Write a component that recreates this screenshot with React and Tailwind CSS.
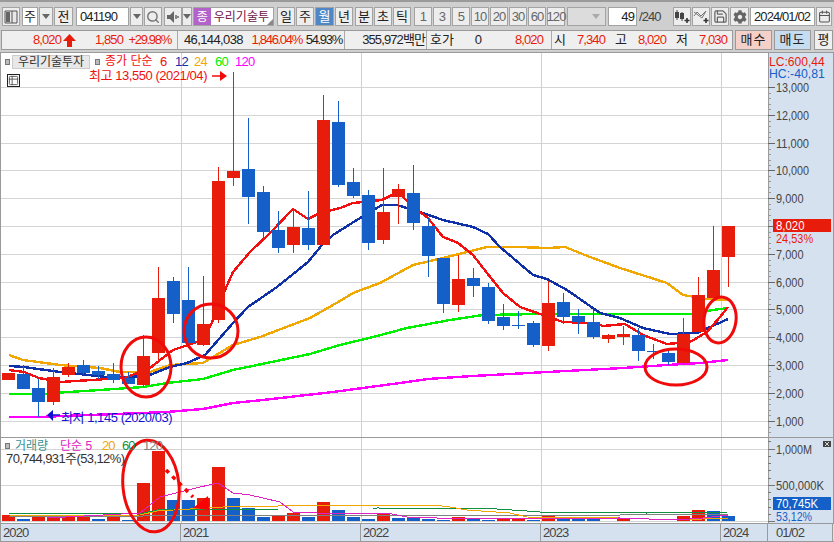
import React from "react";
import { Search, Save, Calendar, Table2 } from "lucide-react";
import { FaCog } from "react-icons/fa";

const RED = "#e81c0a";
const BLUE = "#1460c8";

// [top, bottom, wickTop, wickBottom, color]
const candles = [
  [373, 380, 373, 380, "r"], [374, 389, 365, 389, "b"], [388, 402, 379, 417, "b"], [377, 402, 368, 405, "r"],
  [367, 375, 363, 377, "r"], [365, 373, 360, 375, "b"], [371, 375, 366, 379, "b"], [374, 380, 363, 383, "b"],
  [378, 384, 372, 384, "b"], [356, 385, 335, 387, "r"], [298, 353, 267, 360, "r"], [281, 314, 277, 323, "b"],
  [300, 343, 267, 345, "b"], [324, 345, 276, 346, "r"], [181, 320, 167, 323, "r"], [171, 178, 72, 186, "r"],
  [169, 197, 118, 224, "b"], [192, 232, 186, 241, "b"], [230, 248, 211, 253, "b"], [227, 245, 210, 253, "r"],
  [228, 245, 191, 250, "b"], [120, 245, 95, 245, "r"], [122, 185, 101, 187, "b"], [182, 196, 168, 198, "b"],
  [195, 243, 190, 250, "b"], [212, 240, 168, 244, "r"], [189, 197, 184, 224, "r"], [193, 223, 165, 230, "b"],
  [226, 256, 218, 277, "b"], [258, 304, 258, 313, "b"], [279, 305, 255, 312, "r"], [278, 286, 268, 297, "b"],
  [287, 321, 283, 324, "b"], [317, 326, 304, 330, "b"], [325, 326, 311, 329, "b"], [323, 345, 321, 347, "b"],
  [303, 346, 281, 351, "r"], [302, 317, 293, 324, "b"], [316, 322, 309, 334, "b"], [322, 337, 310, 339, "b"],
  [335, 339, 334, 343, "r"], [334, 337, 326, 345, "r"], [335, 351, 328, 361, "b"], [351, 352, 344, 359, "b"],
  [353, 362, 351, 365, "b"], [334, 363, 318, 365, "r"], [295, 332, 277, 332, "r"], [270, 298, 226, 298, "r"],
  [226, 257, 226, 287, "r"],
];

const volumes = [
  [515, "r"], [519, "b"], [517, "r"], [517, "r"], [517, "r"], [517, "r"], [519, "b"], [517, "r"], [520, "b"], [483, "r"],
  [451, "r"], [500, "b"], [500, "b"], [498, "r"], [467, "r"], [498, "b"], [508, "b"], [517, "b"], [516, "r"], [513, "r"],
  [517, "b"], [502, "r"], [510, "b"], [517, "b"], [519, "b"], [514, "r"], [518, "b"], [517, "b"], [519, "b"], [520, "b"],
  [517, "r"], [519, "b"], [520, "b"], [519, "r"], [519, "r"], [520, "b"], [516, "r"], [518, "b"], [519, "b"], [519, "b"],
  [521, "b"], [519, "r"], [521, "b"], [521, "b"], [521, "b"], [516, "r"], [510, "r"], [511, "b"], [516, "b"],
];

const ma6 = "9,370 24,372 39,378 60,382 107,379 125,378 150,368 173,350 197,342 210,327 225,290 233,272 250,252 270,233 293,209 308,219 320,213 340,208 353,203 382,200 398,192 413,207 428,218 443,237 458,243 473,255 487,273 503,293 520,307 540,314 563,322 593,323 603,326 625,324 643,335 667,344 690,342 707,332 720,317 728,307";
const ma12 = "9,366 24,367 60,372 107,377 130,377 150,375 170,367 187,363 205,355 233,323 248,307 277,287 308,262 322,245 333,235 360,218 382,205 397,205 420,212 443,220 473,227 488,234 500,247 533,275 547,279 567,290 600,313 620,318 643,328 670,334 697,333 728,319";
const ma24 = "9,355 23,360 60,365 100,368 120,372 150,372 170,365 203,363 233,345 260,337 310,318 340,301 353,293 380,283 413,265 447,257 487,247 517,247 548,248 565,247 590,257 620,268 667,283 683,295 707,299 728,300";
const ma60 = "9,394 43,394 68,392 100,390 143,387 167,383 203,379 233,370 310,354 340,345 373,337 407,328 450,320 483,315 540,314 690,314 713,310 728,308";
const ma120 = "9,417 38,417 167,412 203,409 233,403 263,400 333,392 400,383 428,379 473,376 547,372 623,368 667,365 700,363 728,360";

const volMa5 = "47,518 140,513 160,497 200,487 218,483 233,493 250,495 280,502 293,512 317,513 387,513 407,517 467,519 620,518 677,520 703,518 728,515";
const volMa20 = "9,515 47,516 140,515 157,511 207,508 240,506 270,507 287,505 433,505 450,507 467,510 510,513 527,517 620,518 677,520 728,518";
const volMa60 = "9,513 140,514 157,510 280,509 373,509 377,508 497,509 527,511 540,512 647,512 647,513 728,512";
const volMa120 = "9,516 143,516 157,515 620,515 728,514";

const priceLines = [13, 12, 11, 10, 9, 8, 7, 6, 5, 4, 3, 2, 1].map((k) => ({
  y: Math.round(226 + (8 - k) * 27.83),
  label: `${k},000`,
}));
const yearLines = [181, 361, 541, 721];

const num = "text-[13px] tracking-[-0.9px] whitespace-nowrap";
const pct = "text-[13px] tracking-[-1.3px] whitespace-nowrap";

function Btn({ className = "", bg = "bg-[#ededed]", color = "text-[#222]", children }) {
  return (
    <div className={`flex h-[19px] items-center justify-center border border-[#a3a3a3] text-[13px] ${bg} ${color} ${className}`}>
      {children}
    </div>
  );
}

function Arrow() {
  return <div className="h-0 w-0 border-x-[4px] border-t-[5px] border-x-transparent border-t-[#666]" />;
}

function AxisText({ x, y, children, className = "fill-[#444]", per = 5.7 }) {
  const text = String(children);
  return (
    <text x={x} y={y} className={`text-[13px] ${className}`} textLength={text.length * per} lengthAdjust="spacingAndGlyphs">
      {text}
    </text>
  );
}

function Toolbar() {
  return (
    <div className="flex h-[28px] items-start gap-px pl-[2px] pt-[5px]">
      <Btn className="w-[18px]">
        <svg width="14" height="14" viewBox="0 0 14 14">
          <path d="M1 1h12v12H1z" fill="#e8e8e8" stroke="#555" />
          <path d="M2 2h4v10H2z" fill="#666" />
          <path d="M8 1v12" stroke="#555" />
        </svg>
      </Btn>
      <Btn className="ml-px w-[16px]" bg="bg-white">주</Btn>
      <Btn className="w-[14px]"><Arrow /></Btn>
      <Btn className="w-[19px]">전</Btn>
      <div className={`ml-[2px] flex h-[19px] w-[53px] items-center border border-[#a3a3a3] bg-white pl-[3px] text-[#222] ${num}`}>041190</div>
      <Btn className="w-[13px]"><Arrow /></Btn>
      <Btn className="w-[18px]"><Search size={14} color="#777" strokeWidth={2.5} /></Btn>
      <Btn className="ml-px w-[18px]">
        <svg width="14" height="14" viewBox="0 0 14 14">
          <path d="M1 5h3l4-4v12l-4-4H1z" fill="#666" />
          <path d="M10 5v4M12 6v2" stroke="#666" strokeWidth="1.5" />
        </svg>
      </Btn>
      <Btn className="-ml-px w-[10px]"><Arrow /></Btn>
      <div className="relative flex h-[19px] w-[81px] items-center border border-[#a3a3a3] bg-white">
        <div className="flex h-full w-[17px] items-center justify-center bg-[#b262c9] text-[12px] text-white">종</div>
        <div className="ml-[3px] w-[60px] whitespace-nowrap text-[12px] text-[#6e1248]">우리기술투</div>
        <div className="absolute bottom-0 right-0 h-0 w-0 border-b-[6px] border-l-[6px] border-b-[#888] border-l-transparent" />
      </div>
      <Btn className="ml-[2px] w-[18px]">일</Btn>
      <Btn className="w-[18px]">주</Btn>
      <Btn className="w-[19px]" bg="bg-[#4f86c6]" color="text-white">월</Btn>
      <Btn className="w-[18px]">년</Btn>
      <Btn className="ml-px w-[18px]">분</Btn>
      <Btn className="w-[18px]">초</Btn>
      <Btn className="w-[18px]">틱</Btn>
      {["1", "3", "5", "10", "20", "30", "60", "120"].map((p, i) => (
        <Btn key={p} color="text-[#666]" className={`w-[18px] tracking-[-0.9px] ${i === 0 ? "ml-[2px]" : ""}`}>{p}</Btn>
      ))}
      <div className="ml-px flex h-[19px] w-[39px] items-center justify-end border border-[#a3a3a3] bg-[#dcdcdc] pr-[5px]">
        <div className="h-0 w-0 border-x-[4px] border-t-[5px] border-x-transparent border-t-[#aaa]" />
      </div>
      <div className={`ml-px flex h-[19px] w-[29px] items-center justify-end border border-[#a3a3a3] bg-white pr-[2px] text-[#222] ${num}`}>49</div>
      <div className={`ml-px flex h-[19px] w-[24px] items-center text-[#444] ${num}`}>/240</div>
      <Btn className="ml-[9px] w-[18px]">
        <svg width="16" height="15" viewBox="0 0 16 15">
          <path d="M3 1v10M8 3v9" stroke="#444" />
          <path d="M1 3h4v6H1zM6 4h4v6H6z" fill="#444" />
          <path d="M13 9v5M10.500 11.500h5" stroke="#333" strokeWidth="1.600" />
        </svg>
      </Btn>
      <Btn className="w-[18px]">
        <svg width="16" height="15" viewBox="0 0 16 15">
          <path d="M1 7l3-4 4 4 5-5M1 3l4 3 4 3 4-7" fill="none" stroke="#777" />
          <path d="M13 9v5M10.500 11.500h5" stroke="#333" strokeWidth="1.600" />
        </svg>
      </Btn>
      <Btn className="w-[18px]"><Save size={15} color="#666" /></Btn>
      <Btn className="w-[19px]"><FaCog size={14} color="#666" /></Btn>
      <div className={`flex h-[19px] w-[65px] items-center border border-[#a3a3a3] bg-white pl-[3px] text-[#222] ${num}`}>2024/01/02</div>
      <Btn className="w-[16px]"><Calendar size={13} color="#555" /></Btn>
    </div>
  );
}

function InfoRow() {
  const red = "text-[#e81c0a] text-right";
  const dark = "text-[#222]";
  return (
    <div className="flex h-[20px] pl-px">
      <div className={`flex h-full w-[732px] items-center border border-[#9a9a9a] bg-[#efefef] ${num}`}>
        <div className="flex h-full w-[176px] items-center border-r border-[#aaa]">
          <span className={`w-[59px] ${red}`}>8,020</span>
          <svg className="ml-[2px]" width="13" height="13" viewBox="0 0 13 13">
            <path d="M6.500 0L13 7H9v6H4V7H0z" fill="#e81c0a" />
          </svg>
          <span className={`w-[47px] ${red}`}>1,850</span>
          <span className={`w-[48px] ${red} ${pct}`}>+29.98%</span>
        </div>
        <div className="flex h-full w-[167px] items-center border-r border-[#aaa]">
          <span className={`w-[65px] text-right tracking-[-0.6px] ${dark}`}>46,144,038</span>
          <span className={`w-[59px] ${red} ${pct}`}>1,846.04%</span>
          <span className={`w-[40px] text-right ${dark} ${pct}`}>54.93%</span>
        </div>
        <div className="flex h-full w-[82px] items-center justify-end border-r border-[#aaa] pr-px">
          <span className={dark}>355,972백만</span>
        </div>
        <div className="flex h-full w-[125px] items-center border-r border-[#aaa]">
          <span className={`ml-[3px] w-[26px] tracking-normal ${dark}`}>호가</span>
          <span className={`w-[25px] text-right ${dark}`}>0</span>
          <span className={`w-[62px] ${red}`}>8,020</span>
        </div>
        <div className="flex h-full items-center">
          <span className={`ml-[2px] w-[12px] ${dark}`}>시</span>
          <span className={`w-[39px] ${red}`}>7,340</span>
          <span className={`ml-[10px] w-[12px] ${dark}`}>고</span>
          <span className={`w-[39px] ${red}`}>8,020</span>
          <span className={`ml-[10px] w-[12px] ${dark}`}>저</span>
          <span className={`w-[39px] ${red}`}>7,030</span>
        </div>
      </div>
      <div className="ml-[2px] flex h-full w-[37px] items-center justify-center border border-[#9a9a9a] bg-[#f4d0c8] text-[13px] tracking-[1px] text-[#222]">매수</div>
      <div className="ml-[2px] flex h-full w-[37px] items-center justify-center border border-[#9a9a9a] bg-[#c6dcf0] text-[13px] tracking-[1px] text-[#222]">매도</div>
      <div className="ml-[3px] flex h-full w-[19px] items-center justify-center border border-[#9a9a9a] bg-[#efefef] text-[13px] text-[#222]">평</div>
    </div>
  );
}

function Line({ points, color, width = 2.4 }) {
  return <polyline points={points} fill="none" stroke={color} strokeWidth={width} shapeRendering="crispEdges" />;
}

function PricePlot() {
  return (
    <svg width="768" height="384" viewBox="0 53 768 384" className="block bg-white">
      {priceLines.map((l) => (
        <rect key={l.y} x="0" y={l.y} width="768" height="1" fill="#d4d4d4" />
      ))}
      {yearLines.map((x) => (
        <rect key={x} x={x} y="53" width="1" height="384" fill="#d0d0d0" />
      ))}
      <rect x="0" y="53" width="1" height="384" fill="#9a9a9a" />
      <Line points={ma120} color="#ff00ff" />
      <Line points={ma60} color="#00ee00" />
      <Line points={ma24} color="#f0a800" />
      <Line points={ma12} color="#1030a8" />
      <Line points={ma6} color="#f01010" />
      {candles.map(([top, bottom, wt, wb, c], i) => (
        <g key={i} fill={c === "r" ? RED : BLUE} shapeRendering="crispEdges">
          <rect x={8 + 15 * i} y={wt} width="1" height={wb - wt} />
          <rect x={2 + 15 * i} y={top} width="13" height={bottom - top} />
        </g>
      ))}
      <g fill="none" stroke="#f00a0a" strokeWidth="3">
        <ellipse cx="146" cy="367" rx="25" ry="30" />
        <ellipse cx="211" cy="331" rx="27" ry="27" />
        <ellipse cx="676" cy="367" rx="31" ry="18" />
        <ellipse cx="720" cy="320" rx="16" ry="23" transform="rotate(8 720 320)" />
      </g>
      <path d="M212 76h9" stroke="#f00a0a" strokeWidth="1.500" />
      <path d="M220 71l7 5-7 5z" fill="#f00a0a" />
      <path d="M47 415l6-5v11z" fill="#1010d0" />
      <path d="M52 415h8" stroke="#1010d0" strokeWidth="1.500" />
    </svg>
  );
}

function PriceAxis() {
  return (
    <svg width="66" height="384" viewBox="768 53 66 384" className="block bg-[#d6e1ef]">
      <rect x="768" y="53" width="1" height="384" fill="#9a9a9a" />
      <rect x="833" y="53" width="1" height="384" fill="#9a9a9a" />
      {priceLines.map((l) => (
        <g key={l.y}>
          <rect x="768" y={l.y} width="7" height="1" fill="#666" />
          {[1, 2, 3, 4].map((m) => (
            <rect key={m} x="768" y={Math.round(l.y + m * 5.57)} width="3" height="1" fill="#999" />
          ))}
          {l.label !== "8,000" && <AxisText x={776} y={l.y + 5} per={5.5}>{l.label}</AxisText>}
        </g>
      ))}
      <rect x="769" y="54" width="64" height="26" fill="#d6e1ef" />
      <AxisText x={769} y={66} className="fill-[#e81c0a]" per={6.2}>LC:600,44</AxisText>
      <AxisText x={769} y={78} className="fill-[#1460c8]" per={6.2}>HC:-40,81</AxisText>
      <rect x="773" y="219" width="58" height="13" fill={RED} />
      <AxisText x={776} y={230} className="fill-white" per={5.7}>8,020</AxisText>
      <AxisText x={776} y={243} className="fill-[#e81c0a]" per={6.2}>24,53%</AxisText>
    </svg>
  );
}

function VolumePlot() {
  return (
    <svg width="768" height="85" viewBox="0 438 768 85" className="relative z-10 block overflow-visible">
      <rect x="0" y="438" width="768" height="85" fill="#fff" />
      {[449, 485, 521].map((y) => (
        <rect key={y} x="0" y={y} width="768" height="1" fill="#d4d4d4" />
      ))}
      {yearLines.map((x) => (
        <rect key={x} x={x} y="438" width="1" height="85" fill="#d0d0d0" />
      ))}
      <rect x="0" y="438" width="1" height="85" fill="#9a9a9a" />
      {volumes.map(([top, c], i) => (
        <rect key={i} x={2 + 15 * i} y={top} width="13" height={521 - top} fill={c === "r" ? RED : BLUE} shapeRendering="crispEdges" />
      ))}
      <Line points={volMa120} color="#808080" width={1} />
      <Line points={volMa60} color="#109040" width={1} />
      <Line points={volMa20} color="#f0a800" width={1} />
      <Line points={volMa5} color="#e020c0" width={1} />
      <ellipse cx="151" cy="486" rx="28" ry="46" transform="rotate(-6 151 486)" fill="none" stroke="#f00a0a" strokeWidth="3" />
      <path d="M166 470L193 497" stroke="#ff0000" strokeWidth="3.500" strokeDasharray="4 5" fill="none" />
      <path d="M193 508l15-12 1 14z" fill="#ff0000" />
    </svg>
  );
}

function VolumeAxis() {
  return (
    <svg width="66" height="85" viewBox="768 438 66 85" className="block bg-[#d6e1ef]">
      <rect x="768" y="438" width="1" height="85" fill="#9a9a9a" />
      <rect x="833" y="438" width="1" height="85" fill="#9a9a9a" />
      {[441, 449, 456, 463, 470, 478, 485, 492, 499, 507, 514, 521].map((y) => (
        <rect key={y} x="768" y={y} width={y === 449 || y === 485 || y === 521 ? 7 : 3} height="1" fill="#777" />
      ))}
      <AxisText x={776} y={454} per={6}>1,000M</AxisText>
      <AxisText x={776} y={490} per={6}>500,000K</AxisText>
      <rect x="773" y="497" width="58" height="13" fill={BLUE} />
      <AxisText x={776} y={508} className="fill-white" per={6}>70,745K</AxisText>
      <AxisText x={776} y={521} className="fill-[#1460c8]" per={6}>53,12%</AxisText>
      <rect x="823" y="441" width="8" height="6" fill="#444" />
      <path d="M825 442l4 4M829 442l-4 4" stroke="#fff" strokeWidth="0.800" />
    </svg>
  );
}

function Marker({ className = "" }) {
  return <div className={`h-[6px] w-[5px] border border-[#777] bg-[#bbb] ${className}`} />;
}

function XAxis() {
  const cell = `flex h-full items-center border-r border-[#9a9a9a] pl-[2px] text-[#444] ${num}`;
  return (
    <div className="flex h-[19px] border-b border-l border-t border-[#9a9a9a] bg-[#d6e1ef]">
      <div className={`w-[180px] ${cell}`}>2020</div>
      <div className={`w-[180px] ${cell}`}>2021</div>
      <div className={`w-[180px] ${cell}`}>2022</div>
      <div className={`w-[180px] ${cell}`}>2023</div>
      <div className={`w-[47px] ${cell}`}>2024</div>
      <div className={`w-[65px] pl-[8px] ${cell}`}>01/02</div>
    </div>
  );
}

export default function App() {
  return (
    <div className="h-[542px] w-[834px] overflow-hidden bg-[#cfcfcf] font-['Liberation_Sans','Noto_Sans_CJK_KR',sans-serif]">
      <div className="h-[2px] bg-[#9a9a9a]" />
      <Toolbar />
      <InfoRow />
      <div className="mt-[2px] h-px bg-[#9a9a9a]" />
      <div className="relative flex h-[384px]">
        <PricePlot />
        <PriceAxis />
        <div className="absolute left-[5px] top-[2px] flex h-[14px] items-center text-[12px]">
          <Marker />
          <div className="ml-[2px] flex h-[14px] w-[78px] items-center justify-center border border-[#ccc] bg-[#e8e8e8] text-[#333]">우리기술투자</div>
          <Marker className="ml-[5px]" />
          <div className="ml-[5px] flex w-[154px] text-[13px] tracking-[-0.7px]">
            <span className="w-[55px] text-[12px] tracking-normal text-[#f01010]">종가 단순</span>
            <span className="w-[15px] text-[#f01010]">6</span>
            <span className="w-[19px] text-[#1030a8]">12</span>
            <span className="w-[21px] text-[#f0a800]">24</span>
            <span className="w-[20px] text-[#00ee00]">60</span>
            <span className="text-[#ff00ff]">120</span>
          </div>
        </div>
        <div className="absolute left-[89px] top-[16px] text-[13px] leading-[14px] tracking-[-0.45px] whitespace-nowrap text-[#f01010]">최고 13,550 (2021/04)</div>
        <div className="absolute left-[7px] top-[21px] flex h-[13px] w-[13px] items-center justify-center border border-[#222] bg-white">
          <Table2 size={11} color="#555" />
        </div>
        <div className="absolute left-[61px] top-[355px] text-[13px] tracking-[-0.45px] whitespace-nowrap text-[#1010d0]">최저 1,145 (2020/03)</div>
      </div>
      <div className="h-px bg-[#9a9a9a]" />
      <div className="relative flex h-[85px]">
        <VolumePlot />
        <VolumeAxis />
        <div className={`absolute left-[5px] top-px z-20 flex h-[13px] items-center ${num}`}>
          <Marker />
          <span className="ml-[5px] w-[45px] text-[12px] tracking-normal text-[#3a9090]">거래량</span>
          <span className="w-[42px] text-[12px] tracking-normal text-[#e020c0]">단순 5</span>
          <span className="w-[20px] text-[#f0a800]">20</span>
          <span className="w-[21px] text-[#109040]">60</span>
          <span className="text-[#808080]">120</span>
        </div>
        <div className="absolute left-[6px] top-[14px] z-20 text-[13px] leading-[14px] tracking-[-0.6px] whitespace-nowrap text-[#333]">70,744,931주(53,12%)</div>
      </div>
      <XAxis />
    </div>
  );
}
